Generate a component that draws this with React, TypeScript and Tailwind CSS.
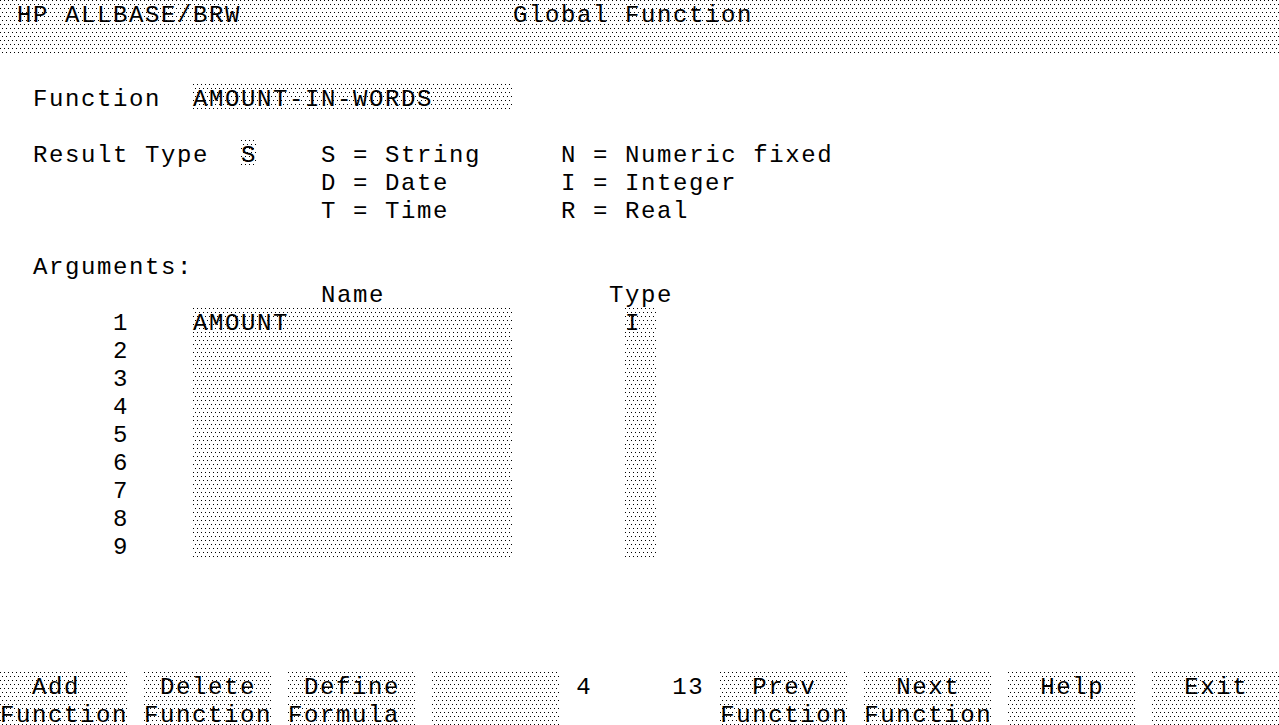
import React from "react";

// halftone fill used for the header, input fields and softkeys
const DOTS =
  "bg-[image:conic-gradient(at_1px_1px,transparent_75%,#000_0),conic-gradient(at_1px_1px,transparent_75%,#000_0)] bg-[length:4px_8px] bg-[position:0_0,2px_4px]";

const pad = (s: string, n: number) => s + " ".repeat(Math.max(0, n - s.length));

function Row({ children, className = "" }: { children?: React.ReactNode; className?: string }) {
  return <div className={`h-[28px] whitespace-pre leading-[31px] ${className}`}>{children}</div>;
}

function Field({ text, width }: { text: string; width: number }) {
  return <span className={`inline-block h-[28px] align-top ${DOTS}`}>{pad(text, width)}</span>;
}

const ARGS = [
  { n: "1", name: "AMOUNT", type: "I" },
  { n: "2", name: "", type: "" },
  { n: "3", name: "", type: "" },
  { n: "4", name: "", type: "" },
  { n: "5", name: "", type: "" },
  { n: "6", name: "", type: "" },
  { n: "7", name: "", type: "" },
  { n: "8", name: "", type: "" },
  { n: "9", name: "", type: "" },
];

type Key = { top: string; bottom: string } | { gap: string };

const KEYS: Key[] = [
  { top: "  Add", bottom: "Function" },
  { gap: " " },
  { top: " Delete", bottom: "Function" },
  { gap: " " },
  { top: " Define", bottom: "Formula" },
  { gap: " " },
  { top: "", bottom: "" },
  { gap: " " },
  { top: "  Prev", bottom: "Function" },
  { gap: " " },
  { top: "  Next", bottom: "Function" },
  { gap: " " },
  { top: "  Help", bottom: "" },
  { gap: " " },
  { top: "  Exit", bottom: "" },
];

function SoftKey({ top, bottom }: { top: string; bottom: string }) {
  return (
    <div className={`flex flex-col ${DOTS}`}>
      <Row>{pad(top, 8)}</Row>
      <Row>{pad(bottom, 8)}</Row>
    </div>
  );
}

export default function App() {
  return (
    <div className="h-[725px] w-[1279px] overflow-hidden bg-white pl-[1px] font-['Liberation_Mono',monospace] text-[24px] tracking-[1.6px] text-black">
      <div className={`-ml-[1px] pl-[1px] ${DOTS}`}>
        <Row>{" HP ALLBASE/BRW                 Global Function"}</Row>
        <Row />
      </div>
      <Row />
      <Row>
        {"  Function  "}
        <Field text="AMOUNT-IN-WORDS" width={20} />
      </Row>
      <Row />
      <Row>
        {"  Result Type  "}
        <Field text="S" width={1} />
        {"    S = String     N = Numeric fixed"}
      </Row>
      <Row>{"                    D = Date       I = Integer"}</Row>
      <Row>{"                    T = Time       R = Real"}</Row>
      <Row />
      <Row>{"  Arguments:"}</Row>
      <Row>{"                    Name              Type"}</Row>
      {ARGS.map((a) => (
        <Row key={a.n}>
          {"       " + a.n + "    "}
          <Field text={a.name} width={20} />
          {"       "}
          <Field text={a.type} width={2} />
        </Row>
      ))}
      <Row />
      <Row />
      <Row />
      <Row />
      <div className="-ml-[1px] flex">
        {KEYS.slice(0, 7).map((k, i) =>
          "gap" in k ? <Row key={i}>{k.gap}</Row> : <SoftKey key={i} top={k.top} bottom={k.bottom} />
        )}
        <Row>{" 4     13 "}</Row>
        {KEYS.slice(8).map((k, i) =>
          "gap" in k ? <Row key={i}>{k.gap}</Row> : <SoftKey key={i} top={k.top} bottom={k.bottom} />
        )}
      </div>
    </div>
  );
}
